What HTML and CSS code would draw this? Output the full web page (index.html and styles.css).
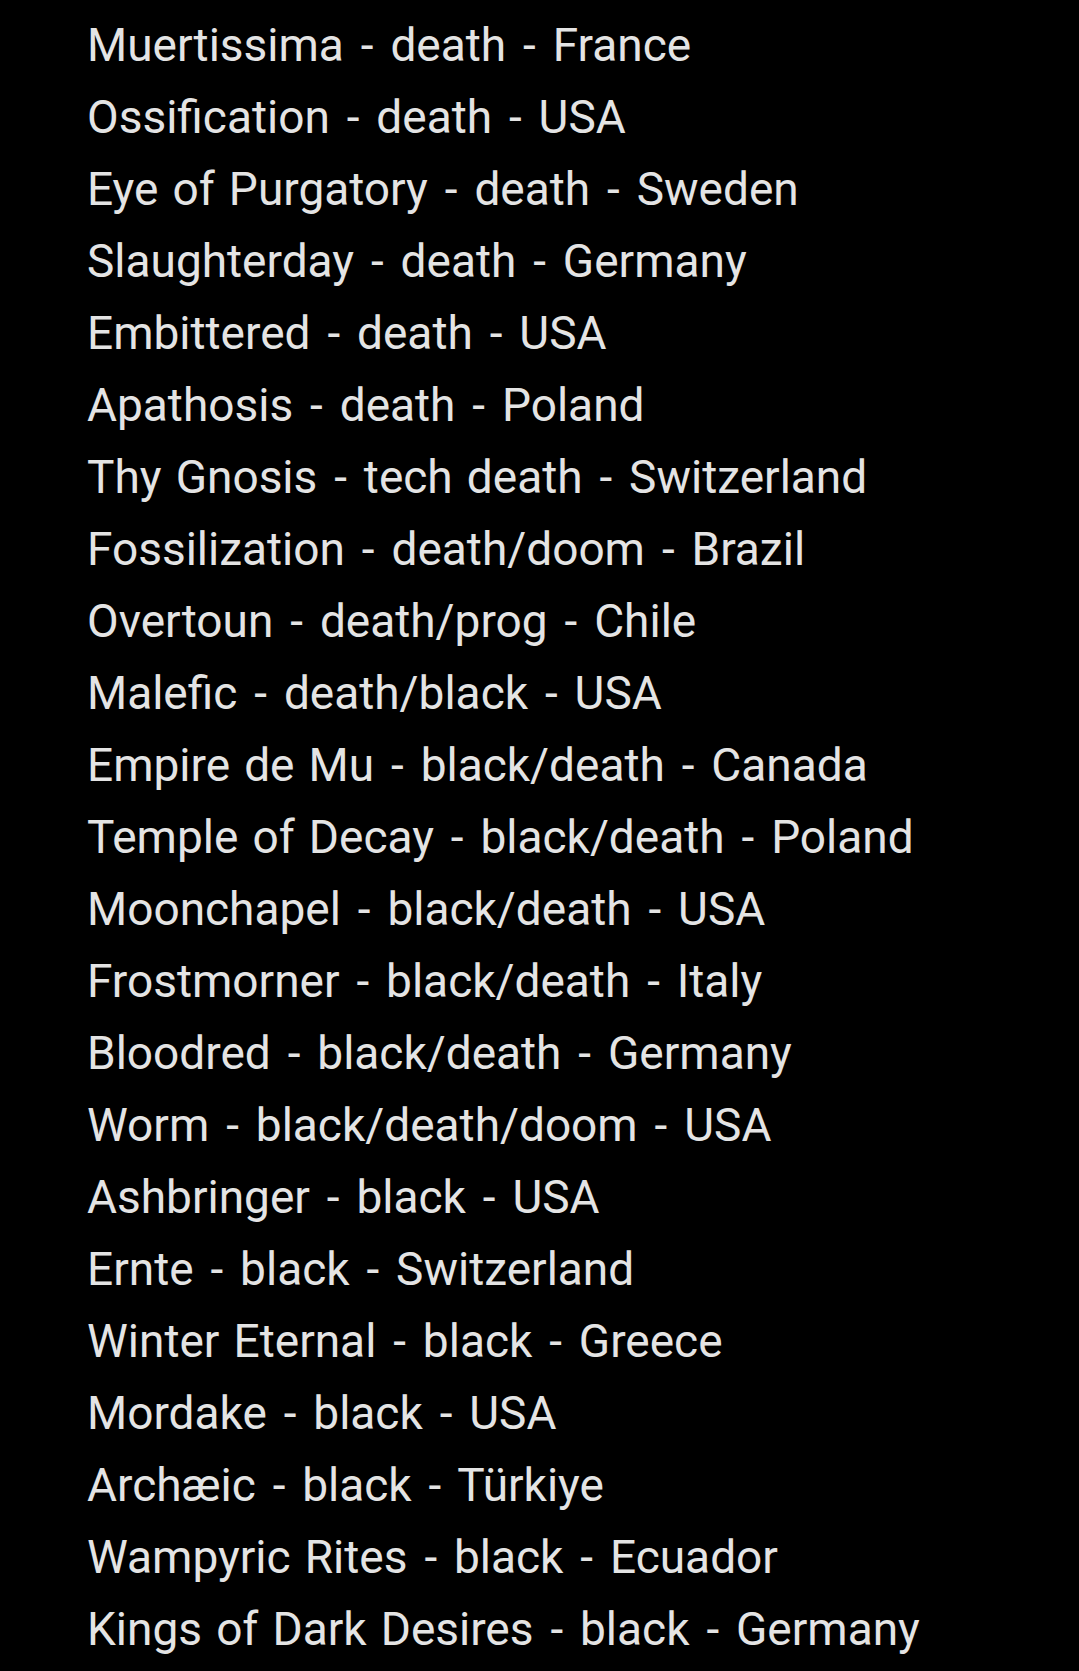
FILE: index.html
```html
<!DOCTYPE html>
<html>
<head>
<meta charset="utf-8">
<link rel="stylesheet" href="styles.css">
</head>
<body>
<ul class="list">
<li>Muertissima <span class="sep">-</span> death <span class="sep">-</span> France</li>
<li>Ossification <span class="sep">-</span> death <span class="sep">-</span> USA</li>
<li>Eye of Purgatory <span class="sep">-</span> death <span class="sep">-</span> Sweden</li>
<li>Slaughterday <span class="sep">-</span> death <span class="sep">-</span> Germany</li>
<li>Embittered <span class="sep">-</span> death <span class="sep">-</span> USA</li>
<li>Apathosis <span class="sep">-</span> death <span class="sep">-</span> Poland</li>
<li>Thy Gnosis <span class="sep">-</span> tech death <span class="sep">-</span> Switzerland</li>
<li>Fossilization <span class="sep">-</span> death/doom <span class="sep">-</span> Brazil</li>
<li>Overtoun <span class="sep">-</span> death/prog <span class="sep">-</span> Chile</li>
<li>Malefic <span class="sep">-</span> death/black <span class="sep">-</span> USA</li>
<li>Empire de Mu <span class="sep">-</span> black/death <span class="sep">-</span> Canada</li>
<li>Temple of Decay <span class="sep">-</span> black/death <span class="sep">-</span> Poland</li>
<li>Moonchapel <span class="sep">-</span> black/death <span class="sep">-</span> USA</li>
<li>Frostmorner <span class="sep">-</span> black/death <span class="sep">-</span> Italy</li>
<li>Bloodred <span class="sep">-</span> black/death <span class="sep">-</span> Germany</li>
<li>Worm <span class="sep">-</span> black/death/doom <span class="sep">-</span> USA</li>
<li>Ashbringer <span class="sep">-</span> black <span class="sep">-</span> USA</li>
<li>Ernte <span class="sep">-</span> black <span class="sep">-</span> Switzerland</li>
<li>Winter Eternal <span class="sep">-</span> black <span class="sep">-</span> Greece</li>
<li>Mordake <span class="sep">-</span> black <span class="sep">-</span> USA</li>
<li>Archæic <span class="sep">-</span> black <span class="sep">-</span> Türkiye</li>
<li>Wampyric Rites <span class="sep">-</span> black <span class="sep">-</span> Ecuador</li>
<li>Kings of Dark Desires <span class="sep">-</span> black <span class="sep">-</span> Germany</li>
</ul>
</body>
</html>
```
FILE: styles.css
```css
html, body {
  margin: 0;
  padding: 0;
  background: #000;
}
body {
  width: 1079px;
  height: 1671px;
  overflow: hidden;
}
.list {
  list-style: none;
  margin: 0;
  padding: 9px 0 0 87px;
  font-family: Roboto, "Noto Sans", sans-serif;
  font-size: 46px;
  line-height: 72px;
  word-spacing: 2.7px;
  color: #e4e4e4;
  white-space: nowrap;
}
.sep {
  margin: 0 2.8px;
}
```
